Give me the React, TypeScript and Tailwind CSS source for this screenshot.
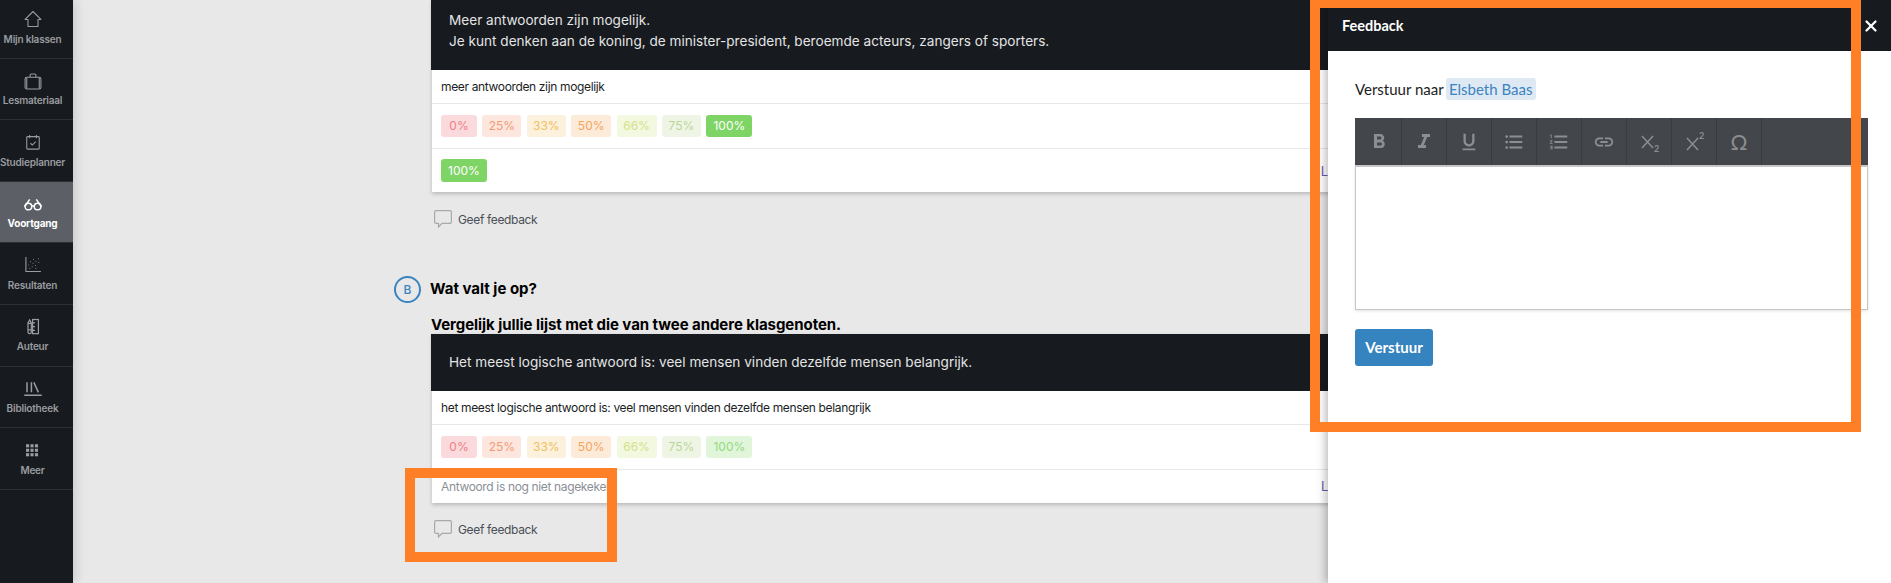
import {
  MdFormatBold,
  MdFormatItalic,
  MdFormatUnderlined,
  MdFormatListBulleted,
  MdFormatListNumbered,
  MdLink,
} from "react-icons/md";
import { X } from "lucide-react";

const iconProps = {
  width: 24,
  height: 24,
  viewBox: "0 0 24 24",
  fill: "none",
  stroke: "currentColor",
  strokeWidth: 1.3,
};

const HomeIcon = () => (
  <svg {...iconProps}>
    <path d="M2.500 12.500 12 3l9.500 9.500h-3.500V21H6v-8.500z" strokeLinejoin="round" />
  </svg>
);
const CaseIcon = () => (
  <svg {...iconProps}>
    <rect x="2.500" y="7.500" width="19" height="14" rx="2" />
    <path d="M8.500 7.500V5a1.500 1.500 0 0 1 1.500-1.500h4A1.500 1.500 0 0 1 15.500 5v2.500M4.500 8v13M19.500 8v13" />
  </svg>
);
const PlannerIcon = () => (
  <svg {...iconProps}>
    <rect x="4.500" y="5.500" width="15" height="15" rx="1" />
    <path d="M8 3.500v4M16 3.500v4M9 13.500l2.200 2.200 4-4.200" />
  </svg>
);
const GlassesIcon = () => (
  <svg {...iconProps} strokeWidth={1.800}>
    <circle cx="6.500" cy="15" r="4" />
    <circle cx="17.500" cy="15" r="4" />
    <path d="M10.500 14.500h3M2.500 14.500 8 6.500M21.500 14.500 16 6.500M1.500 14.500h1M21.500 14.500h1" />
  </svg>
);
const ScatterIcon = () => (
  <svg {...iconProps}>
    <path d="M3.500 2.400v17.500h18" />
    <g fill="currentColor" stroke="none">
      <circle cx="7" cy="12" r=".6" />
      <circle cx="9" cy="8" r=".6" />
      <circle cx="11" cy="14" r=".6" />
      <circle cx="12" cy="10" r=".6" />
      <circle cx="15" cy="12.500" r=".6" />
      <circle cx="18.500" cy="4.500" r=".6" />
      <circle cx="12.500" cy="5" r=".6" />
      <circle cx="19" cy="9" r=".6" />
      <circle cx="8" cy="16" r=".6" />
      <circle cx="15.500" cy="16" r=".6" />
      <circle cx="15.500" cy="7.500" r=".6" />
    </g>
  </svg>
);
const AuthorIcon = () => (
  <svg {...iconProps} strokeWidth={1.500}>
    <path d="M6 7 8 3.500 10 7v11a2 2 0 0 1-4 0zM6 7.500h4M6 15.500h4" />
    <rect x="11.500" y="3" width="7" height="17" />
    <path d="M11.500 7h3M11.500 11.500h3M11.500 16h3" />
  </svg>
);
const LibraryIcon = () => (
  <svg {...iconProps}>
    <path d="M4.800 4v12M10.100 4v12M13 4l5.500 12M1.500 19.500h21" strokeWidth={1.800} />
  </svg>
);
const MoreIcon = () => (
  <svg width="12.500" height="13" viewBox="0 0 14 14" fill="currentColor">
    <rect x="0" y="0" width="3.500" height="3.500" />
    <rect x="5" y="0" width="3.500" height="3.500" />
    <rect x="10" y="0" width="3.500" height="3.500" />
    <rect x="0" y="5" width="3.500" height="3.500" />
    <rect x="5" y="5" width="3.500" height="3.500" />
    <rect x="10" y="5" width="3.500" height="3.500" />
    <rect x="0" y="10" width="3.500" height="3.500" />
    <rect x="5" y="10" width="3.500" height="3.500" />
    <rect x="10" y="10" width="3.500" height="3.500" />
  </svg>
);

const navItems = [
  { label: "Mijn klassen", icon: <HomeIcon /> },
  { label: "Lesmateriaal", icon: <CaseIcon /> },
  { label: "Studieplanner", icon: <PlannerIcon /> },
  { label: "Voortgang", icon: <GlassesIcon />, active: true },
  { label: "Resultaten", icon: <ScatterIcon /> },
  { label: "Auteur", icon: <AuthorIcon /> },
  { label: "Bibliotheek", icon: <LibraryIcon /> },
  { label: "Meer", icon: <MoreIcon /> },
];

const Sidebar = () => (
  <nav className="relative z-10 w-[73px] shrink-0 bg-[#171a1f] shadow-[3px_0_10px_rgba(0,0,0,0.12)]">
    <div className="-mt-[3px]">
      {navItems.map((item) => (
        <div
          key={item.label}
          className={
            item.active
              ? "flex h-[61.6px] flex-col items-center border-b border-[#2c3036] bg-[#5c6066] pt-3 pr-2 text-white"
              : "flex h-[61.6px] flex-col items-center border-b border-[#2c3036] pt-3 pr-2 text-[#9a9c9f]"
          }
        >
          <div className="flex h-5 w-5 items-center justify-center">{item.icon}</div>
          <span
            className={
              item.active
                ? "mt-[2.5px] whitespace-nowrap text-[10px] leading-[14px] font-bold tracking-[-0.2px]"
                : "mt-[2.5px] whitespace-nowrap text-[10px] leading-[14px] font-semibold tracking-[-0.2px]"
            }
          >
            {item.label}
          </span>
        </div>
      ))}
    </div>
  </nav>
);

const chips = [
  { label: "0%", cls: "w-[36px] bg-[#fadadd] text-[#f27d84]" },
  { label: "25%", cls: "w-[39px] bg-[#fde6dd] text-[#f29a77]" },
  { label: "33%", cls: "w-[39px] bg-[#fbf1dc] text-[#f0c060]" },
  { label: "50%", cls: "w-[40px] bg-[#fdebd9] text-[#f5a45e]" },
  { label: "66%", cls: "w-[40px] bg-[#f3f8e0] text-[#d5e08a]" },
  { label: "75%", cls: "w-[39px] bg-[#eff5e5] text-[#bbd59a]" },
];

const Chips = ({ full }: { full: boolean }) => (
  <div className="flex h-[45px] gap-[5.4px] border-b border-[#e8e8e8] pt-[11px] pl-[9px]">
    {chips.map((c) => (
      <span
        key={c.label}
        className={`flex h-[22px] items-center justify-center rounded-[3px] text-[12px] ${c.cls}`}
      >
        {c.label}
      </span>
    ))}
    <span
      className={
        full
          ? "flex h-[22px] w-[46px] items-center justify-center rounded-[3px] bg-[#7fd466] text-[12px] text-white"
          : "flex h-[22px] w-[46px] items-center justify-center rounded-[3px] bg-[#e0f5da] text-[12px] text-[#95d97f]"
      }
    >
      100%
    </span>
  </div>
);

const GiveFeedback = ({ top }: { top: string }) => (
  <div
    className={`-ml-[1px] flex h-[18px] items-center gap-[6px] pl-[3px] text-[12px] tracking-[-0.35px] text-[#4a4f57] ${top}`}
  >
    <svg width="18" height="18" viewBox="0 0 18 18" fill="none" stroke="#a9a9a9" strokeWidth="1.200">
      <path d="M2 .6h14A1.400 1.400 0 0 1 17.400 2v10A1.400 1.400 0 0 1 16 13.400H8L4.500 17v-3.600H2A1.400 1.400 0 0 1 .6 12V2A1.400 1.400 0 0 1 2 .6z" />
    </svg>
    <span className="pt-[1px]">Geef feedback</span>
  </div>
);

const Card = ({
  header,
  answer,
  full,
  bottom,
}: {
  header: React.ReactNode;
  answer: string;
  full: boolean;
  bottom: React.ReactNode;
}) => (
  <div className="bg-white shadow-[0_2px_4px_rgba(0,0,0,0.2)]">
    {header}
    <div className="flex h-[34px] items-center border-b border-[#e8e8e8] pl-[9px] text-[12px] tracking-[-0.35px] text-[#1b1e24]">
      {answer}
    </div>
    <Chips full={full} />
    {bottom}
  </div>
);

const SubSup = ({ sup }: { sup?: boolean }) => (
  <svg
    width="24"
    height="24"
    viewBox="0 0 24 24"
    fill="none"
    stroke="currentColor"
    strokeWidth="1.500"
    className="ml-[2px]"
  >
    <path d={sup ? "M4 8l11 12M15 8 4 20" : "M4 6l11 12M15 6 4 18"} />
    <text
      x="16"
      y={sup ? "9" : "22"}
      fill="currentColor"
      stroke="none"
      fontSize="9"
      fontWeight="700"
      fontFamily="Lato, sans-serif"
    >
      2
    </text>
  </svg>
);

const toolButtons = [
  <MdFormatBold size={24} />,
  <MdFormatItalic size={24} />,
  <MdFormatUnderlined size={22} />,
  <MdFormatListBulleted size={22} />,
  <MdFormatListNumbered size={22} />,
  <MdLink size={22} />,
  <SubSup />,
  <SubSup sup />,
  <span className="text-[21px]">Ω</span>,
];

const FeedbackPanel = () => (
  <aside className="absolute top-0 right-0 bottom-0 z-20 w-[563px] bg-white font-['Lato',sans-serif] shadow-[-3px_0_8px_rgba(0,0,0,0.25)]">
    <header className="flex h-[51px] items-center justify-between bg-[#171a1f] pr-[11px] pl-[14px] text-[14.5px] font-bold text-white">
      <span>Feedback</span>
      <X size={18} strokeWidth={3} />
    </header>
    <div className="px-[27px] pt-[27px]">
      <div className="flex h-[22px] items-center gap-[2px] text-[15px] text-[#222]">
        <span>Verstuur naar</span>
        <span className="flex h-[22px] w-[90px] items-center justify-center rounded-[3px] bg-[#dfe9f3] text-[#3a84c0]">
          Elsbeth Baas
        </span>
      </div>
      <div className="mt-[18px] flex h-[47px] w-[513px] bg-[#43464b] pl-[2px] text-[#8c8e91]">
        {toolButtons.map((b, i) => (
          <div key={i} className="flex w-[45px] items-center justify-center border-r border-[#383b40]">
            {b}
          </div>
        ))}
      </div>
      <div className="h-[145px] w-[513px] border border-t-2 border-[#c6c6c6] shadow-[0_1px_3px_rgba(0,0,0,0.12)]" />
      <button
        type="button"
        className="mt-[19px] flex h-[37px] w-[78px] items-center justify-center rounded-[3px] bg-[#3583bf] text-[15px] font-bold text-white"
      >
        Verstuur
      </button>
    </div>
  </aside>
);

export default function App() {
  return (
    <div className="relative flex h-[583px] w-[1891px] overflow-hidden bg-[#e8e8e8] font-['Inter',sans-serif]">
      <Sidebar />
      <main className="w-[1100px] shrink-0 pl-[359px]">
        <div className="w-[1100px]">
          <Card
            answer="meer antwoorden zijn mogelijk"
            full
            header={
              <div className="-ml-px h-[70px] bg-[#171a1f] pt-[10px] pl-[18px] text-[13.6px] leading-[21px] text-[#e4e4e4]">
                <p>Meer antwoorden zijn mogelijk.</p>
                <p>Je kunt denken aan de koning, de minister-president, beroemde acteurs, zangers of sporters.</p>
              </div>
            }
            bottom={
              <div className="flex h-[43px] items-start justify-between pt-[10px] pr-[204px] pl-[9px]">
                <span className="flex h-[23px] w-[46px] items-center justify-center rounded-[3px] bg-[#7fd466] text-[12px] text-white">
                  100%
                </span>
                <span className="pt-[3px] text-[13px] text-[#6a5aa8]">L</span>
              </div>
            }
          />
          <GiveFeedback top="mt-[18px]" />

          <div className="mt-[48px] -ml-[38px] flex h-[27px] items-center gap-[10px]">
            <div className="flex h-[27px] w-[27px] items-center justify-center rounded-full border-2 border-[#3a84c0] text-[12px] font-medium text-[#3a84c0]">
              B
            </div>
            <h3 className="-ml-px text-[15px] font-bold text-black">Wat valt je op?</h3>
          </div>
          <h3 className="mt-[12px] -ml-px text-[15px] leading-[19px] font-bold tracking-[-0.06px] text-black">
            Vergelijk jullie lijst met die van twee andere klasgenoten.
          </h3>

          <Card
            answer="het meest logische antwoord is: veel mensen vinden dezelfde mensen belangrijk"
            full={false}
            header={
              <div className="-ml-px flex h-[57px] items-center bg-[#171a1f] pl-[18px] text-[13.6px] text-[#e4e4e4]">
                Het meest logische antwoord is: veel mensen vinden dezelfde mensen belangrijk.
              </div>
            }
            bottom={
              <div className="flex h-[33px] items-center justify-between pr-[204px] pl-[9px] text-[12px] tracking-[-0.35px] text-[#8b8f96]">
                <span>Antwoord is nog niet nagekeken</span>
                <span className="text-[13px] text-[#6a5aa8]">L</span>
              </div>
            }
          />
          <GiveFeedback top="mt-[17px]" />
        </div>
      </main>

      <FeedbackPanel />

      {/* annotation boxes drawn over the screenshot */}
      <div className="absolute top-[-2px] left-[1310px] z-30 h-[434px] w-[551px] border-10 border-[#ff7f27]" />
      <div className="absolute top-[468px] left-[405px] z-30 h-[94px] w-[212px] border-10 border-[#ff7f27]" />
    </div>
  );
}
